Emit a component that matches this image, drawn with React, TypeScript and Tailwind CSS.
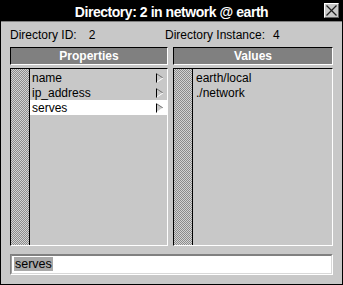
import React from "react";

const Arrow = () => (
  <svg width="8" height="10" viewBox="0 0 8 10" className="block">
    <polygon points="1,1 7,5 1,9" fill="#c8c8c8" />
    <line x1="1" y1="1" x2="7" y2="5" stroke="#707070" strokeWidth="1" />
    <line x1="1" y1="9" x2="7" y2="5" stroke="#ffffff" strokeWidth="1" />
    <line x1="0.5" y1="0.5" x2="0.5" y2="9.5" stroke="#000000" strokeWidth="1" />
  </svg>
);

const Header = ({ label }: { label: string }) => (
  <div className="h-[18px] bg-[#808080] border-t border-l border-t-black border-l-black border-b border-r border-b-white border-r-white text-white font-bold text-[12px] leading-[16px] text-center">
    {label}
  </div>
);

const Stipple = () => (
  <div className="w-[19px] shrink-0 border-r border-black bg-[image:repeating-conic-gradient(#8c8c8c_0%_25%,#d4d4d4_0%_50%)] bg-[length:2px_2px]" />
);

export default function App() {
  const props = ["name", "ip_address", "serves"];
  const values = ["earth/local", "./network"];
  return (
    <div
      className="w-[343px] h-[285px] bg-[#c8c8c8] border-l border-r border-b border-black flex flex-col text-black"
      style={{ fontFamily: '"Liberation Sans", Arial, sans-serif' }}
    >
      <div className="relative h-[22px] shrink-0 bg-black border-b border-[#808080] text-white font-bold text-[14px] leading-[16px] pt-[4px] text-center tracking-[-0.45px]">
        Directory: 2 in network @ earth
        <div className="absolute right-[3px] top-[3px] w-[15px] h-[15px] bg-[#c8c8c8] border-t border-l border-t-white border-l-white border-b border-r border-b-[#606060] border-r-[#606060]">
          <svg width="13" height="13" viewBox="0 0 13 13" className="block">
            <line x1="1.5" y1="1.5" x2="11.5" y2="11.5" stroke="#202020" strokeWidth="1.2" />
            <line x1="11.5" y1="1.5" x2="1.5" y2="11.5" stroke="#202020" strokeWidth="1.2" />
          </svg>
        </div>
      </div>

      <div className="px-[9px] flex flex-col">
        <div className="h-[25px] pt-[6px] flex text-[12px] leading-[14px]">
          <div className="w-[155px] flex">
            <span>Directory ID:</span>
            <span className="ml-[12px]">2</span>
          </div>
          <div className="flex">
            <span>Directory Instance:</span>
            <span className="ml-[8px]">4</span>
          </div>
        </div>

        <div className="grid grid-cols-[158px_160px] gap-x-[5px]">
          <Header label="Properties" />
          <Header label="Values" />

          <div className="mt-[3px] h-[178px] flex border-t border-l border-t-black border-l-black border-b border-r border-b-white border-r-white">
            <Stipple />
            <div className="flex-1 pt-[1px] flex flex-col">
              {props.map((p) => (
                <div
                  key={p}
                  className={`h-[15px] text-[12px] leading-[15px] pl-[2px] pr-[3px] flex items-end justify-between ${p === "serves" ? "bg-white" : ""}`}
                >
                  <span className="relative top-[1px]">{p}</span>
                  <span className="self-center">
                    <Arrow />
                  </span>
                </div>
              ))}
            </div>
          </div>

          <div className="mt-[3px] h-[178px] flex border-t border-l border-t-black border-l-black border-b border-r border-b-white border-r-white">
            <Stipple />
            <div className="flex-1 pt-[1px] flex flex-col">
              {values.map((v) => (
                <div key={v} className="h-[15px] text-[12px] leading-[15px] pl-[3px]">
                  <span className="relative top-[1px]">{v}</span>
                </div>
              ))}
            </div>
          </div>
        </div>

        <div className="mt-[8px] h-[21px] border-t border-l border-t-[#808080] border-l-[#808080] border-b border-r border-b-white border-r-white">
          <div className="h-full flex items-start bg-white border-t border-l border-t-[#808080] border-l-[#a0a0a0] border-b border-r border-b-[#d8d8d8] border-r-[#d8d8d8] pl-[2px] pt-[1px]">
            <span className="block bg-[#a8a8a8] text-[12.5px] leading-[14px] px-[1px]">serves</span>
          </div>
        </div>
      </div>
    </div>
  );
}
